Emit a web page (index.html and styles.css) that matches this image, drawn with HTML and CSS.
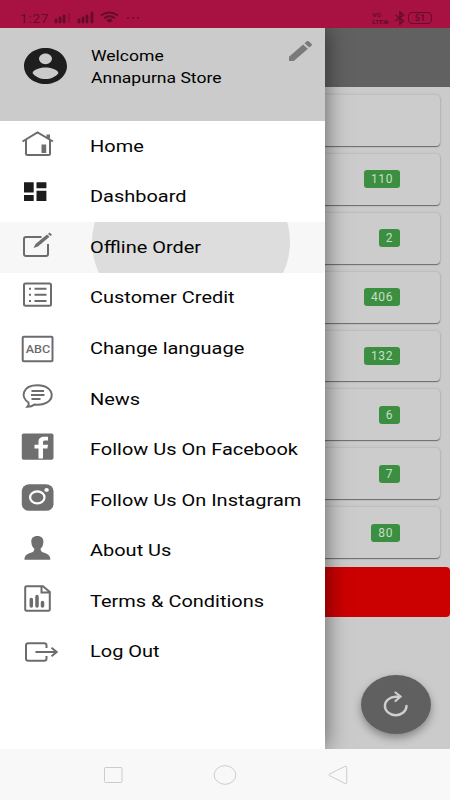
FILE: index.html
```
<!DOCTYPE html>
<html lang="en">
<head>
    <meta charset="UTF-8">
    <meta name="viewport" content="width=device-width, initial-scale=1.0">
    <title>Annapurna Store</title>
    <link rel="stylesheet" href="styles.css">
</head>
<body>

    <div class="status-bar">
        <span class="clock">1:27</span>
        <svg class="status-left" width="88" height="16" viewBox="0 0 88 16">
            <path d="M2 12v-2M6 12V8M10 12V6M25 12v-2M29 12V8M33 12V6M38 12V3" fill="none" stroke="currentColor" stroke-width="2.8" stroke-linecap="round"/>
            <path d="M15 13V3" stroke="currentColor" stroke-width="2.6" opacity="0.3"/>
            <path d="M47 5.500q8.500-6 17 0M50 8.200q5.500-4 11 0M53 10.700q2.500-2 5 0" fill="none" stroke="currentColor" stroke-width="1.900"/>
            <path d="M53.500 11h4l-2 2z" fill="currentColor"/>
            <path d="M73 8h2M78 8h2M83 8h2" stroke="currentColor" stroke-width="1.500"/>
        </svg>
        <span class="volte"><span>VO</span><span>LTE⊕</span></span>
        <svg class="bluetooth" width="12" height="14" viewBox="0 0 12 14">
            <path d="M1.500 4l8 6L6 13V1l3.500 3-8 6" fill="none" stroke="currentColor" stroke-width="1.500"/>
        </svg>
        <span class="battery">51</span>
    </div>

    <div class="screen">
        <div class="page">
            <div class="app-bar"></div>
            <div class="cards">
                <div class="card"></div>
                <div class="card"><span class="badge">110</span></div>
                <div class="card"><span class="badge">2</span></div>
                <div class="card"><span class="badge">406</span></div>
                <div class="card"><span class="badge">132</span></div>
                <div class="card"><span class="badge">6</span></div>
                <div class="card"><span class="badge">7</span></div>
                <div class="card"><span class="badge">80</span></div>
            </div>
            <div class="red-button"></div>
            <div class="fab">
                <svg width="30" height="30" viewBox="0 0 30 30">
                    <path d="M25.500 16A10.800 9.200 0 1 1 15 6.800H18.500" fill="none" stroke="#cfcfcf" stroke-width="2.400" stroke-linecap="round"/>
                    <path d="M14.500 2.500l5 4-5 4.500" fill="none" stroke="#cfcfcf" stroke-width="2.200" stroke-linecap="round"/>
                </svg>
            </div>
        </div>

        <div class="drawer">
            <div class="profile">
                <svg class="avatar" width="43" height="36" viewBox="2 2 20 20" preserveAspectRatio="none">
                    <path fill="#1e1e1e" d="M12 2C6.480 2 2 6.480 2 12s4.480 10 10 10 10-4.480 10-10S17.520 2 12 2zm0 3c1.660 0 3 1.340 3 3s-1.340 3-3 3-3-1.340-3-3 1.340-3 3-3zm0 14.200c-2.500 0-4.710-1.280-6-3.220.03-1.990 4-3.080 6-3.080 1.990 0 5.970 1.090 6 3.080-1.290 1.940-3.500 3.220-6 3.220z"/>
                </svg>
                <div class="names">
                    <span class="wide">Welcome</span>
                    <span class="wide">Annapurna Store</span>
                </div>
                <svg class="pencil" width="23" height="20" viewBox="3 3 18 18" preserveAspectRatio="none">
                    <path fill="#7a7a7a" d="M3 17.250V21h3.750L17.810 9.940l-3.750-3.750L3 17.250zM20.710 7.040c.39-.39.39-1.020 0-1.410l-2.340-2.340c-.39-.39-1.020-.39-1.410 0l-1.830 1.830 3.750 3.750 1.830-1.830z"/>
                </svg>
            </div>

            <ul class="menu">
                <li class="item">
                    <svg class="icon" viewBox="0 0 90 50">
                        <path d="M22.500 20.500L37.500 11.500L53 20.500M26 19v13.500q0 1.500 1.500 1.500h21q1.500 0 1.500-1.500V19" class="line"/>
                        <path d="M46.500 13.500h3.500v5.500l-3.500-2zM41.500 23.500h4.700v8.500h-4.700z" class="solid"/>
                    </svg>
                    <span class="wide">Home</span>
                </li>
                <li class="item">
                    <svg class="icon" viewBox="0 0 90 50">
                        <path fill="#1c1c1c" d="M24 11.300h9.700v10.200H24zM36.500 11.300h9.900v6h-9.900zM24 23.900h9.700v6H24zM36.500 19.700h9.900v10.200h-9.900z"/>
                    </svg>
                    <span class="wide">Dashboard</span>
                </li>
                <li class="item active">
                    <span class="ripple"></span>
                    <svg class="icon" viewBox="0 0 90 50">
                        <path d="M41.500 15H26q-2 0-2 2v15q0 2 2 2h20q2 0 2-2V22" class="line"/>
                        <path d="M33.500 26l2-4L47 12.500l2.500 2.200L38 24.500zM48 12l1.500-1.500 2.500 2.200-1.500 1.300z" class="solid"/>
                    </svg>
                    <span class="wide">Offline Order</span>
                </li>
                <li class="item">
                    <svg class="icon" viewBox="0 0 90 50">
                        <rect x="24" y="11.500" width="27" height="22.300" rx="1.500" class="line"/>
                        <path d="M34.500 16.800h12M34.500 22.700h12M34.500 29h12M29 16.800h2M29 22.700h2M29 29h2" class="line"/>
                    </svg>
                    <span class="wide">Customer Credit</span>
                </li>
                <li class="item">
                    <svg class="icon" viewBox="0 0 90 50">
                        <rect x="22.700" y="13.800" width="29.800" height="24.500" rx="1" class="line"/>
                        <text x="25.700" y="29.900" textLength="24.500" lengthAdjust="spacingAndGlyphs" class="abc">ABC</text>
                    </svg>
                    <span class="wide">Change language</span>
                </li>
                <li class="item">
                    <svg class="icon" viewBox="0 0 90 50">
                        <path d="M28.500 28.500C20 23 22.500 11.200 37.500 11.200c9 0 14.200 4.800 14.200 9.800 0 6.500-7.500 10.800-17.200 9.600-2 1.500-4.500 2.200-7 2.200q1.800-1.800 1-4.300z" class="line"/>
                        <path d="M31.500 17h12.500M31 21h13.500M31.500 25h9" class="line"/>
                    </svg>
                    <span class="wide">News</span>
                </li>
                <li class="item">
                    <svg class="icon" viewBox="0 0 90 50">
                        <rect x="21.800" y="9.500" width="31.700" height="26.300" rx="1.800" class="solid"/>
                        <path fill="#fff" d="M38.500 34.500V24.500H34.500V20.700h4v-2.800c0-3.600 2.200-5.200 5.800-5.200h3.700v3.800h-2.600c-1.800 0-2.400.6-2.400 1.900v2.300h5l-.6 3.800h-4.400v10z"/>
                    </svg>
                    <span class="wide">Follow Us On Facebook</span>
                </li>
                <li class="item">
                    <svg class="icon" viewBox="0 0 90 50">
                        <rect x="21.800" y="9.300" width="31.700" height="26.500" rx="7.500" ry="6.500" class="solid"/>
                        <ellipse cx="37.300" cy="22.400" rx="7.200" ry="6" fill="none" stroke="#fff" stroke-width="2.200"/>
                        <ellipse cx="46.600" cy="14.900" rx="2.200" ry="1.900" fill="#fff"/>
                    </svg>
                    <span class="wide">Follow Us On Instagram</span>
                </li>
                <li class="item">
                    <svg class="icon" viewBox="0 0 90 50">
                        <path d="M37.300 11c-4 0-6.300 2.200-6 6 .1 3 1.300 5.200 3 6.600 0 2-.3 3-2 3.700-4.500 1.700-7.600 2-7.900 7.500h26c-.2-5.500-3.500-5.800-7.800-7.500-1.600-.7-2-1.700-2-3.700 1.700-1.400 2.700-3.600 2.800-6.600.3-3.800-2-6-6.100-6z" class="solid"/>
                    </svg>
                    <span class="wide">About Us</span>
                </li>
                <li class="item">
                    <svg class="icon" viewBox="0 0 90 50">
                        <path d="M43 10.200H26.500q-1.300 0-1.300 1.300v22q0 1.300 1.300 1.300h22q1.300 0 1.300-1.300V16zM41.500 10.500v6h8" class="line"/>
                        <path d="M31.300 23.500v6.500M37 20.500v9.500M42.500 26.500v3.500" class="bars"/>
                    </svg>
                    <span class="wide">Terms &amp; Conditions</span>
                </li>
                <li class="item">
                    <svg class="icon" viewBox="0 0 90 50">
                        <path d="M46.500 22v-2.500q0-2.300-2.300-2.300H28.300q-2.300 0-2.300 2.300v13q0 2.300 2.300 2.300h15.900q2.300 0 2.300-2.300V30M35.500 26H56.500M51.500 21.800l5.200 4.200-5.200 4.200" class="line"/>
                    </svg>
                    <span class="wide">Log Out</span>
                </li>
            </ul>
        </div>
    </div>

    <div class="nav-bar">
        <svg width="24" height="24" viewBox="0 0 24 24"><rect x="3.500" y="4.500" width="17.500" height="15" rx="1"/></svg>
        <svg width="24" height="24" viewBox="0 0 24 24"><ellipse cx="12" cy="12" rx="10.800" ry="9.300"/></svg>
        <svg width="24" height="24" viewBox="0 0 24 24"><path d="M3.500 11q-1 .8 0 1.600l15.300 7.800q2 .8 2-1V4.500q0-1.800-2-1z"/></svg>
    </div>

</body>
</html>
```
FILE: styles.css
```
body {
    font-family: Roboto, "Liberation Sans", sans-serif;
    margin: 0;
    width: 450px;
    height: 800px;
    display: flex;
    flex-direction: column;
    overflow: hidden;
    background-color: #f8f8f8;
}

.status-bar {
    height: 28px;
    box-sizing: border-box;
    padding: 8px 18px 0 20px;
    display: flex;
    align-items: center;
    background-color: #a81243;
    color: #650c2b;
}

.clock {
    width: 34px;
    font-size: 13.500px;
    line-height: 20px;
    letter-spacing: 0.8px;
}

.status-left {
    margin-right: auto;
}

.volte {
    display: flex;
    flex-direction: column;
    gap: 1px;
    width: 19px;
    font-size: 6px;
    font-weight: bold;
    line-height: 6px;
}

.volte span {
    height: 6px;
    overflow: hidden;
    transform: scaleX(1.15);
    transform-origin: left center;
}

.bluetooth {
    margin: 0 2px 0 3px;
}

.battery {
    width: 24px;
    height: 12px;
    box-sizing: border-box;
    border: 1px solid #650c2b;
    border-radius: 4px;
    font-size: 9px;
    font-weight: bold;
    line-height: 10px;
    text-align: center;
}

.screen {
    position: relative;
    height: 721px;
    overflow: hidden;
}

.page {
    height: 721px;
    background-color: #cbcbcb;
}

.app-bar {
    height: 59px;
    background-color: #616161;
}

.cards {
    display: flex;
    flex-direction: column;
    gap: 8px;
    padding: 8px 10px 0;
}

.card {
    height: 50.900px;
    box-sizing: border-box;
    padding-right: 40px;
    display: flex;
    align-items: center;
    justify-content: flex-end;
    border-radius: 4px;
    background-color: #cccccc;
    box-shadow: 0 1px 1px rgba(0, 0, 0, 0.45), 0 0 3px rgba(0, 0, 0, 0.16);
}

.badge {
    padding: 1px 7px 0;
    border-radius: 3px;
    background-color: #3c8f40;
    color: #c5dfc6;
    font-size: 12px;
    line-height: 17px;
    letter-spacing: 0.6px;
}

.red-button {
    height: 50px;
    margin-top: 8.500px;
    border-radius: 4px;
    background-color: #cb0000;
}

.fab {
    position: absolute;
    right: 19px;
    bottom: 15px;
    width: 70px;
    height: 59px;
    display: flex;
    align-items: center;
    justify-content: center;
    border-radius: 50%;
    background-color: #606060;
    box-shadow: 0 4px 9px rgba(0, 0, 0, 0.35);
}

.drawer {
    position: absolute;
    top: 0;
    left: 0;
    width: 325px;
    height: 721px;
    background-color: #fff;
    box-shadow: 0 0 22px rgba(0, 0, 0, 0.55);
}

.profile {
    height: 93px;
    box-sizing: border-box;
    padding: 13px 13px 0 24px;
    display: flex;
    align-items: flex-start;
    background-color: #cbcbcb;
}

.avatar {
    margin-top: 7px;
}

.names {
    flex: 1;
    display: flex;
    flex-direction: column;
    margin-left: 24px;
    font-size: 14.500px;
    line-height: 22px;
    padding-top: 4.500px;
}

/* labels are drawn wider than they are tall */
.wide {
    display: inline-block;
    white-space: nowrap;
    transform: scaleX(1.21);
    transform-origin: left center;
}

.menu {
    list-style: none;
    margin: 0;
    padding: 0;
}

.item {
    position: relative;
    height: 50.550px;
    display: flex;
    align-items: center;
    overflow: hidden;
    color: #050505;
    font-size: 16.500px;
}

.item .wide {
    position: relative;
}

.active {
    background-color: #f7f7f7;
}

.ripple {
    position: absolute;
    left: 92px;
    top: -64px;
    width: 198px;
    height: 168px;
    border-radius: 50%;
    background-color: #dddddd;
}

.icon {
    position: relative;
    width: 90px;
    height: 50px;
    margin-bottom: 1px;
}

.line {
    fill: none;
    stroke: #6c6c6c;
    stroke-width: 2;
}

.solid {
    fill: #6f6f6f;
}

.bars {
    fill: none;
    stroke: #6c6c6c;
    stroke-width: 3.500;
    stroke-linecap: round;
}

.abc {
    fill: #6c6c6c;
    font-size: 10px;
    font-weight: 500;
}

.nav-bar {
    flex: 1;
    display: flex;
    justify-content: center;
    align-items: center;
    gap: 88.500px;
}

.nav-bar svg {
    fill: none;
    stroke: #cccccc;
    stroke-width: 1;
}
```
